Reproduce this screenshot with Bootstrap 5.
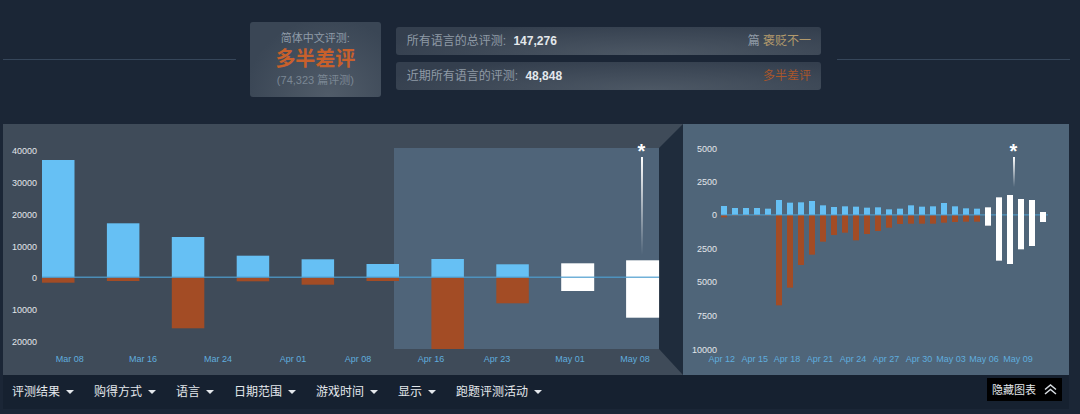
<!DOCTYPE html>
<html lang="zh-CN">
<head>
  <meta charset="UTF-8" />
  <meta name="viewport" content="width=device-width, initial-scale=1.0" />
  <title>用户评测</title>
  <link href="https://cdn.jsdelivr.net/npm/bootstrap@5.3.3/dist/css/bootstrap.min.css" rel="stylesheet" />
  <style>
    body {
      background: #1b2636;
      font-family: "Liberation Sans", "Noto Sans CJK SC", sans-serif;
      overflow: hidden;
    }
    .page { width: 1080px; height: 414px; padding: 22px 10px 0 3px; }
    .summary { height: 75px; margin-bottom: 27px; }
    .rule { height: 1px; width: 233px; background: #36465a; flex: none; }
    .score-box {
      width: 131px;
      height: 75px;
      margin: 0 15px 0 14px;
      border-radius: 3px;
      background: radial-gradient(ellipse at 60% 100%, #515c69 0%, #3a4655 75%);
      color: #8f9ba8;
    }
    .score-box .label { font-size: 11px; line-height: 12px; }
    .score-box .score { font-size: 20px; line-height: 24px; font-weight: 700; color: #c8602c; margin: 3px 0; }
    .score-box .count { font-size: 11px; line-height: 13px; color: #7b8794; }
    .totals { width: 426px; gap: 7px; margin-top: -2px; }
    .total-bar {
      height: 28px;
      padding: 0 10px 0 11px;
      border-radius: 3px;
      background: radial-gradient(ellipse at 60% 100%, #4d5865 0%, #343f4e 80%);
      color: #8f9aa6;
      font-size: 12px;
    }
    .total-bar b { color: #e4e8ec; margin-left: 4px; }
    .mixed { color: #b39a6c; }
    .negative { color: #a9562b; }
    .charts { height: 251px; width: 1066px; }
    .charts svg { display: block; flex: none; }
    .charts text { font-family: "Liberation Sans", sans-serif; font-size: 9px; }
    .y-tick { fill: #e2e6ea; text-anchor: end; }
    .x-tick { fill: #5fadde; text-anchor: middle; }
    .star { fill: #fff; font-size: 20px !important; font-weight: 700; text-anchor: middle; }
    .filters { width: 1066px; height: 34px; background: #162130; padding: 0 7px 0 9px; }
    .filter-list { gap: 20px; }
    .filters .btn {
      color: #e4e8ec;
      font-size: 12px;
      line-height: 16px;
      padding: 0;
      border: 0;
    }
    .filters .dropdown-toggle::after { margin-left: 6px; vertical-align: 2px; border-width: 4px 4px 0; }
    .filters .hide-btn {
      background: #000;
      height: 23px;
      width: 75px;
      border-radius: 0;
      margin-top: -5px;
      font-size: 11px;
    }
  </style>
</head>
<body>
  <div class="page">
    <div class="summary d-flex align-items-center">
      <div class="rule"></div>
      <div class="score-box d-flex flex-column align-items-center justify-content-center text-center">
        <div class="label">简体中文评测:</div>
        <div class="score">多半差评</div>
        <div class="count">(74,323 篇评测)</div>
      </div>
      <div class="totals d-flex flex-column">
        <div class="total-bar d-flex align-items-center justify-content-between">
          <span>所有语言的总评测: <b>147,276</b></span>
          <span>篇 <span class="mixed">褒贬不一</span></span>
        </div>
        <div class="total-bar d-flex align-items-center justify-content-between">
          <span>近期所有语言的评测: <b>48,848</b></span>
          <span class="negative">多半差评</span>
        </div>
      </div>
      <div class="rule ms-3"></div>
    </div>

    <div class="charts d-flex">
      <svg id="overall" width="680" height="251" viewBox="3 124 680 251"></svg>
      <svg id="recent" width="386" height="251" viewBox="683 124 386 251"></svg>
    </div>

    <div class="filters d-flex align-items-center justify-content-between">
      <div class="d-flex align-items-center filter-list">
        <button class="btn dropdown-toggle">评测结果</button>
        <button class="btn dropdown-toggle">购得方式</button>
        <button class="btn dropdown-toggle">语言</button>
        <button class="btn dropdown-toggle">日期范围</button>
        <button class="btn dropdown-toggle">游戏时间</button>
        <button class="btn dropdown-toggle">显示</button>
        <button class="btn dropdown-toggle">跑题评测活动</button>
      </div>
      <button class="btn hide-btn d-flex align-items-center justify-content-center gap-2">
        隐藏图表
        <svg width="13" height="11" viewBox="0 0 13 11" fill="none" stroke="#d8dde2" stroke-width="1.5"><path d="M1 5.5 6.5 1 12 5.5M1 10l5.5-4.5L12 10"/></svg>
      </button>
    </div>
  </div>

  <script>
    const NS = "http://www.w3.org/2000/svg";
    const BLUE = "#66c0f4", RUST = "#a34c25", WHITE = "#ffffff";

    function add(svg, tag, attrs, text) {
      const el = document.createElementNS(NS, tag);
      for (const k in attrs) el.setAttribute(k, attrs[k]);
      if (text !== undefined) el.textContent = text;
      svg.appendChild(el);
      return el;
    }

    function rect(svg, x, y, w, h, fill) {
      add(svg, "rect", { x, y, width: w, height: h, fill });
    }

    function ticks(svg, yRight, yTicks, xTicks) {
      yTicks.forEach(([label, y]) => add(svg, "text", { class: "y-tick", x: yRight, y: y + 3.2 }, label));
      xTicks.forEach(([label, x]) => add(svg, "text", { class: "x-tick", x, y: 362 }, label));
    }

    function gradient(svg, id) {
      const defs = add(svg, "defs", {});
      const g = add(defs, "linearGradient", { id, x1: 0, y1: 0, x2: 0, y2: 1 });
      add(g, "stop", { offset: 0, "stop-color": "#fff" });
      add(g, "stop", { offset: 1, "stop-color": "#fff", "stop-opacity": 0 });
    }

    // overall chart
    const overall = document.getElementById("overall");
    gradient(overall, "fadeA");
    rect(overall, 3, 124, 680, 251, "#3f4b59");
    rect(overall, 394, 148, 265, 201, "#4f6479");
    add(overall, "polygon", { points: "659,148 683,124 683,375 659,349", fill: "#1f2c3c" });

    const overallBars = [
      [160, 282.7], [223.3, 281], [237, 328.3], [255.7, 281.3], [259.3, 284.7],
      [264, 281], [259, 349], [264.3, 303.3], [263.3, 291], [260.3, 317.7]
    ];
    const ZERO_A = 277.5;
    overallBars.forEach(([top, bottom], i) => {
      const x = 42 + i * 64.9;
      if (i >= 8) {
        rect(overall, x, top, 33, bottom - top, WHITE);
      } else {
        rect(overall, x, top, 32.5, ZERO_A - top, BLUE);
        rect(overall, x, ZERO_A, 32.5, bottom - ZERO_A, RUST);
      }
    });
    rect(overall, 42, 276.6, 617, 1.2, "#4f9fcf");
    ticks(overall, 37,
      [["40000", 150.3], ["30000", 182.7], ["20000", 214.3], ["10000", 246.7], ["0", 277.5], ["10000", 309.5], ["20000", 341.5]],
      [["Mar 08", 69.7], ["Mar 16", 143], ["Mar 24", 218], ["Apr 01", 293], ["Apr 08", 358], ["Apr 16", 431], ["Apr 23", 497], ["May 01", 570], ["May 08", 635]]);
    add(overall, "text", { class: "star", x: 641.5, y: 158 }, "*");
    rect(overall, 641, 157, 2, 98, "url(#fadeA)");

    // recent chart, values read as pixel rows
    const recent = document.getElementById("recent");
    gradient(recent, "fadeB");
    rect(recent, 683, 124, 386, 251, "#4f6579");

    const tops = [258, 264, 264, 264, 266, 240, 248, 247, 243, 256, 261, 259, 260, 263, 262, 268, 266, 256, 260, 259, 249, 259, 265, 266];
    const bottoms = [292, 287, 287, 287, 287, 556, 503, 435, 404, 365, 345, 338, 361, 342, 333, 323, 312, 311, 311, 311, 308, 306, 305, 305];
    const whites = [[262, 317], [232, 422], [225, 432], [237, 388], [240, 378], [276, 306]];
    const ZERO_B = 215;
    const row = z => 120 + z / 3;
    tops.forEach((t, i) => {
      const x = 721 + i * 11;
      rect(recent, x, row(t), 6, ZERO_B - row(t), BLUE);
      rect(recent, x, ZERO_B, 6, row(bottoms[i]) - ZERO_B, RUST);
    });
    rect(recent, 721, 214.4, 327, 1, "#4f9fcf");
    whites.forEach(([t, b], i) => rect(recent, 985 + i * 11, row(t), 6, (b - t) / 3, WHITE));
    ticks(recent, 717,
      [["5000", 148.7], ["2500", 181.7], ["0", 215], ["2500", 249], ["5000", 282], ["7500", 316], ["10000", 349.5]],
      [["Apr 12", 721.7], ["Apr 15", 754.7], ["Apr 18", 787], ["Apr 21", 820], ["Apr 24", 853], ["Apr 27", 886], ["Apr 30", 919], ["May 03", 951], ["May 06", 984], ["May 09", 1018]]);
    add(recent, "text", { class: "star", x: 1013.5, y: 158 }, "*");
    rect(recent, 1013, 157, 2, 30, "url(#fadeB)");
  </script>
</body>
</html>
